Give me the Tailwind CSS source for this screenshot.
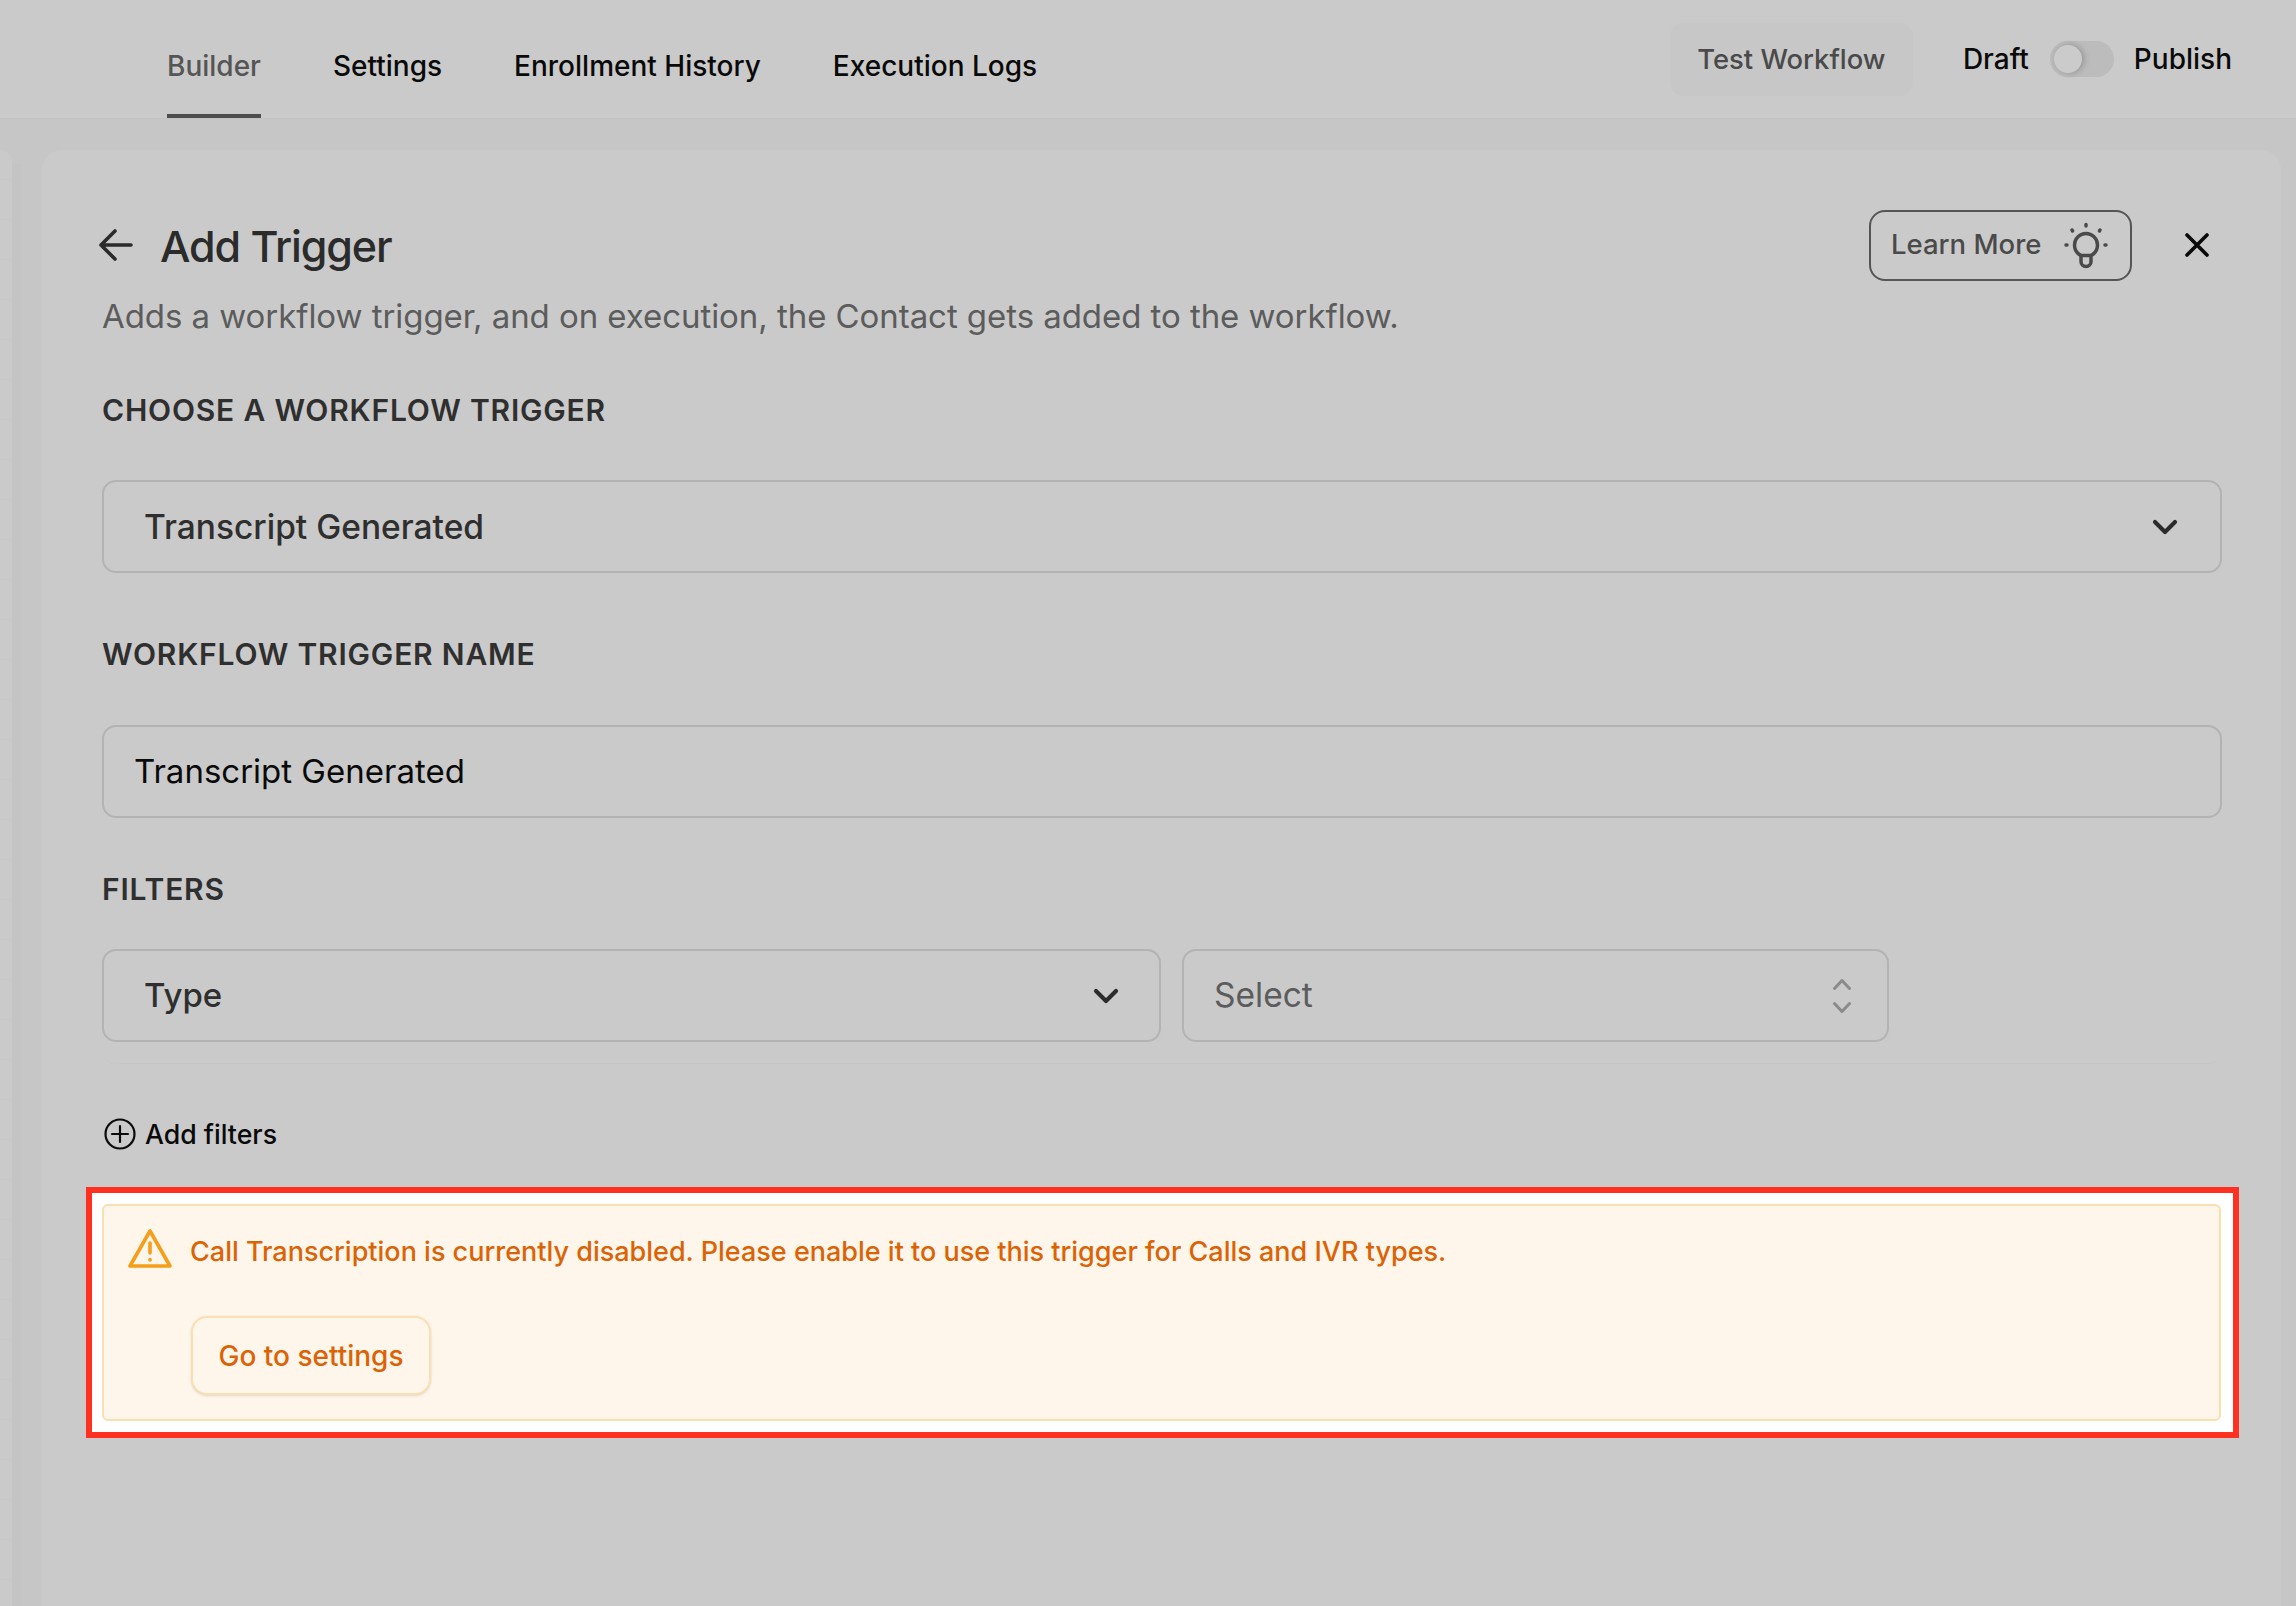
<!doctype html>
<html><head><meta charset="utf-8"><script src="https://cdn.jsdelivr.net/npm/@tailwindcss/browser@4"></script></head>
<body class="bg-[#c6c6c6] font-['Inter',sans-serif] m-0">
<div class="w-[2296px] h-[1606px] overflow-hidden flex flex-col">
  <header class="h-[119px] shrink-0 bg-[#cacaca] border-b border-[#c3c3c3] flex justify-between pl-[167px] pr-[64px]">
    <nav class="flex gap-[72px] text-[28px] font-medium text-[#0a0a0a]">
      <a class="h-[118px] pt-[48px] leading-[36px] border-b-4 border-[#4d4d4d] text-[#555555]">Builder</a>
      <a class="h-[118px] pt-[48px] leading-[36px]">Settings</a>
      <a class="h-[118px] pt-[48px] leading-[36px]">Enrollment History</a>
      <a class="h-[118px] pt-[48px] leading-[36px]">Execution Logs</a>
    </nav>
    <div class="flex items-start text-[28px] font-medium text-[#0a0a0a]">
      <button class="mt-[23px] h-[73px] w-[243px] rounded-[14px] bg-[#c7c7c7] text-[27.4px] text-[#4a4a4a]">Test Workflow</button>
      <span class="ml-[50px] mt-[41px] leading-[36px]">Draft</span>
      <span class="ml-[21px] mt-[41px] w-[64px] h-[36px] rounded-full bg-[#bcbcbc] p-[4px] flex"><span class="w-[28px] h-[28px] rounded-full bg-[#cbcbcb] shadow-[2px_0_6px_rgba(0,0,0,0.22)]"></span></span>
      <span class="ml-[20px] mt-[41px] leading-[36px]">Publish</span>
    </div>
  </header>
  <div class="flex-1 flex">
    <div class="w-[12px] mt-[31px] rounded-tr-[14px] bg-[#cacaca] bg-[repeating-linear-gradient(180deg,transparent_0,transparent_29px,#c7c7c7_29px,#c7c7c7_30px,transparent_30px,transparent_40px)]"></div>
    <div class="w-[9px] bg-[#c4c4c4] mt-[45px]"></div>
    <main class="ml-[21px] mt-[31px] w-[2239px] rounded-t-[20px] bg-[#cacaca] pl-[60px] pr-[59px] pt-[59px] flex flex-col items-stretch">
      <div class="flex items-center h-[72px]">
        <svg class="w-[36px] h-[36px] -ml-[5px] -mt-[1px]" viewBox="0 0 36 36" fill="none" stroke="#2b2b2b" stroke-width="3.6" stroke-linecap="round" stroke-linejoin="round"><path d="M34 18H4M18 4 4 18l14 14"/></svg>
        <h1 class="ml-[27px] pt-[2px] text-[43px] leading-[70px] font-medium text-[#2b2b2b] -tracking-[1.1px]">Add Trigger</h1>
        <button class="ml-auto h-[71px] w-[263px] rounded-[16px] border-2 border-[#555555] flex items-center pl-[20px] text-[27.5px] font-medium text-[#4a4a4a]">Learn More
          <svg class="ml-[21px] w-[48px] h-[50px]" viewBox="0 0 48 50" fill="none" stroke="#4a4a4a" stroke-width="3.5" stroke-linecap="round" stroke-linejoin="round"><path d="M24 4.500v1.500M4 25h1M43 25h1M10 10l.6 1M38 10l-.6 1"/><path d="M19 35.500c-4-2-6.500-6-6.500-10.500a11.500 11.500 0 0 1 23 0c0 4.500-2.500 8.500-6.500 10.500z"/><path d="M19 35.500v6a5 5 0 0 0 10 0v-6"/></svg>
        </button>
        <svg class="ml-[52px] mr-[12px] w-[26px] h-[26px]" viewBox="0 0 26 26" fill="none" stroke="#0a0a0a" stroke-width="3.6" stroke-linecap="round"><path d="M3 3l20 20M23 3 3 23"/></svg>
      </div>
      <p class="mt-[13px] text-[33px] leading-[44px] text-[#5c5c5c] -tracking-[0.06px]">Adds a workflow trigger, and on execution, the Contact gets added to the workflow.</p>
      <label class="mt-[52px] text-[30px] leading-[40px] font-semibold text-[#2f2f2f] tracking-[0.8px]">CHOOSE A WORKFLOW TRIGGER</label>
      <div class="mt-[50px] h-[93px] pt-[2px] rounded-[14px] border-2 border-[#b3b3b3] flex items-center justify-between pl-[40px] pr-[42px] text-[33.5px] font-medium text-[#2f2f2f]">Transcript Generated
        <svg class="w-[26px] h-[16px] -mt-[1px]" viewBox="0 0 26 16" fill="none" stroke="#2b2b2b" stroke-width="4.2" stroke-linecap="round" stroke-linejoin="round"><path d="M3 3l10 10L23 3"/></svg>
      </div>
      <label class="mt-[62px] -translate-y-[1px] text-[30px] leading-[40px] font-semibold text-[#2f2f2f] tracking-[0.8px]">WORKFLOW TRIGGER NAME</label>
      <div class="mt-[50px] h-[93px] rounded-[14px] border-2 border-[#b3b3b3] flex items-center pl-[30px] text-[33px] text-[#0a0a0a]">Transcript Generated</div>
      <label class="mt-[51px] text-[30px] leading-[40px] font-semibold text-[#2f2f2f] tracking-[0.8px]">FILTERS</label>
      <div class="mt-[40px] h-[115px] flex gap-[21px] rounded-b-[14px] border-b border-[#c6c6c6] items-start">
        <div class="w-[1059px] h-[93px] rounded-[14px] border-2 border-[#b3b3b3] flex items-center justify-between pl-[40px] pr-[40px] text-[33px] font-medium text-[#2f2f2f]">Type
          <svg class="w-[26px] h-[16px]" viewBox="0 0 26 16" fill="none" stroke="#2b2b2b" stroke-width="4.2" stroke-linecap="round" stroke-linejoin="round"><path d="M3 3l10 10L23 3"/></svg>
        </div>
        <div class="w-[707px] h-[93px] rounded-[14px] border-2 border-[#b3b3b3] flex items-center justify-between pl-[30px] pr-[35px] text-[33.5px] text-[#5c5c5c]">Select
          <svg class="w-[20px] h-[36px]" viewBox="0 0 20 36" fill="none" stroke="#8a8a8a" stroke-width="3" stroke-linecap="round" stroke-linejoin="round"><path d="M2.500 10.500 10 2.500l7.500 8M2.500 25.500l7.500 8 7.500-8"/></svg>
        </div>
      </div>
      <div class="mt-[54px] h-[32px] flex items-center text-[26.7px] font-medium text-[#0a0a0a]">
        <svg class="w-[32px] h-[32px] ml-[2px]" viewBox="0 0 32 32" fill="none" stroke="#0a0a0a" stroke-width="2.2" stroke-linecap="round"><circle cx="16" cy="16" r="14.500"/><path d="M16 8v16M8 16h16"/></svg>
        <span class="ml-[9px]">Add filters</span>
      </div>
      <div class="mt-[37px] -ml-[16px] -mr-[17px] h-[251px] bg-white border-[6px] border-[#ff3020] py-[11px] pl-[10px] pr-[12px]">
        <div class="h-[217px] rounded-[6px] border-2 border-[#fadfb3] bg-[#fff6eb] pl-[22px] pt-[22px]">
          <div class="flex items-start">
            <svg class="w-[48px] h-[44px]" viewBox="0 0 48 44" fill="none" stroke="#f59e1c" stroke-width="3.6" stroke-linecap="round" stroke-linejoin="round"><path d="M24 3 4 38h40z"/><path d="M24 15v10M24 31.500v.4"/></svg>
            <p class="ml-[16px] mt-[4px] text-[27px] leading-[40px] font-medium text-[#dc6305]">Call Transcription is currently disabled. Please enable it to use this trigger for Calls and IVR types.</p>
          </div>
          <button class="ml-[65px] mt-[44px] h-[79px] w-[240px] rounded-[16px] border-2 border-[#fadfb3] bg-[#fff6eb] shadow-sm text-[28px] font-medium text-[#dc6305]">Go to settings</button>
        </div>
      </div>
    </main>
  </div>
</div>
</body></html>
